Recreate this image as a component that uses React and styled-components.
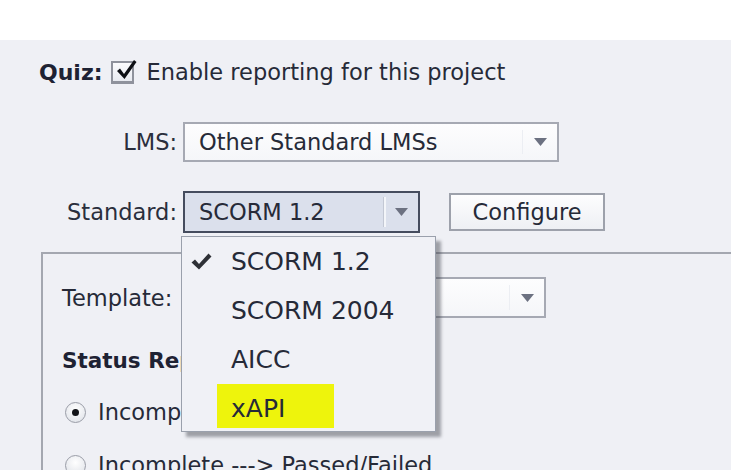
import React from "react";
import styled, { createGlobalStyle } from "styled-components";

const Global = createGlobalStyle`
  html, body { margin: 0; padding: 0; overflow: hidden; background: #ffffff; }
  body { font-family: "DejaVu Sans", "Liberation Sans", sans-serif; color: #262a38; }
  * { box-sizing: border-box; }
`;

const Page = styled.div`
  width: 731px;
  height: 470px;
  overflow: hidden;
  display: flex;
  flex-direction: column;
`;

const TopBar = styled.div`
  height: 40px;
  flex: none;
  background: #ffffff;
`;

const Panel = styled.div`
  flex: 1;
  background: #eff0f5;
  padding: 12px 0 0 39px;
  display: flex;
  flex-direction: column;
  font-size: 22.5px;
`;

const QuizRow = styled.div`
  height: 40px;
  display: flex;
  align-items: center;
`;

const QuizLabel = styled.span`
  font-weight: bold;
  font-size: 22px;
  color: #1e2233;
  margin-right: 8px;
`;

const CheckBox = styled.span`
  position: relative;
  width: 23px;
  height: 23px;
  border: 2px solid #8f929c;
  border-bottom-width: 3px;
  background: linear-gradient(#fbfbfd, #e8eaf0);
  margin-right: 13px;
  flex: none;
  svg { position: absolute; left: 1px; top: -5px; }
`;

const FormGrid = styled.div`
  display: grid;
  grid-template-columns: 138px auto;
  column-gap: 6px;
  align-items: center;
  margin-top: ${(p) => p.$top}px;
`;

const Label = styled.span`
  text-align: right;
  white-space: nowrap;
  color: #2a2e3c;
`;

const Select = styled.div`
  position: relative;
  width: ${(p) => p.$w}px;
  height: ${(p) => p.$h}px;
  border: 2px solid ${(p) => (p.$active ? "#454c5e" : "#a6a9b3")};
  background: ${(p) => (p.$active ? "#dbe0ec" : "linear-gradient(#fdfdfe, #f5f6f9)")};
  display: flex;
  align-items: center;
  padding-left: 14px;
  white-space: nowrap;
  color: #262a38;
`;

const SelectText = styled.span`
  flex: 1;
`;

const ArrowZone = styled.span`
  width: 35px;
  align-self: stretch;
  display: flex;
  align-items: center;
  justify-content: center;
  border-left: 1px solid ${(p) => (p.$active ? "#c3c8d4" : "#eceef3")};
  box-shadow: ${(p) => (p.$active ? "inset 2px 0 0 #f3f5f9" : "none")};
  margin: ${(p) => (p.$active ? "4px 0" : "6px 0")};
`;

const Arrow = () => (
  <svg width="13" height="8" viewBox="0 0 13 8">
    <path d="M0 0 H13 L6.5 8 Z" fill="#6c7181" />
  </svg>
);

const StandardCell = styled.div`
  display: flex;
  align-items: center;
  gap: 29px;
`;

const Button = styled.div`
  width: 156px;
  height: 38px;
  border: 2px solid #9da1ab;
  background: linear-gradient(#fdfdfe, #eef0f4);
  display: flex;
  align-items: center;
  justify-content: center;
  color: #262a38;
`;

const Menu = styled.div`
  position: absolute;
  left: -4px;
  top: 43px;
  width: 255px;
  height: 196px;
  background: #f0f1f6;
  border: 1.5px solid #9aa0ac;
  box-shadow: 5px 5px 3px rgba(60, 62, 70, 0.45);
  z-index: 10;
  display: flex;
  flex-direction: column;
  font-size: 25px;
`;

const MenuItem = styled.div`
  height: 49px;
  flex: none;
  display: flex;
  align-items: ${(p) => (p.$hl ? "flex-start" : "center")};
`;

const CheckCol = styled.span`
  width: 49px;
  flex: none;
  display: flex;
  align-items: center;
  padding-left: 9px;
`;

const Highlight = styled.span`
  display: inline-flex;
  align-items: center;
  height: 44px;
  margin-left: -14px;
  padding: 4px 49px 0 14px;
  background: #eef40c;
`;

const GroupBox = styled.div`
  margin-top: 19px;
  margin-left: 2px;
  margin-right: -20px;
  flex: 1;
  border: 2px solid #a4a7b0;
  border-right: none;
  border-bottom: none;
  padding: 23px 0 0 19px;
  display: flex;
  flex-direction: column;
`;

const TemplateGrid = styled.div`
  display: grid;
  grid-template-columns: 114px auto;
  column-gap: 6px;
  align-items: center;
`;

const TemplateLabel = styled.span`
  white-space: nowrap;
`;

const SectionTitle = styled.div`
  height: 30px;
  margin-top: 27px;
  display: flex;
  align-items: center;
  font-weight: bold;
  font-size: 21.5px;
  color: #1e2233;
`;

const RadioRow = styled.div`
  height: 30px;
  margin-top: ${(p) => p.$top}px;
  display: flex;
  align-items: center;
  gap: 12px;
  white-space: nowrap;
  padding-left: 3px;
`;

const Radio = styled.span`
  width: 21px;
  height: 21px;
  border-radius: 50%;
  border: 1.5px solid #9a9da7;
  background: radial-gradient(circle at 50% 35%, #ffffff, #dcdfe6);
  display: flex;
  align-items: center;
  justify-content: center;
  flex: none;
  &::after {
    content: "";
    width: 7px;
    height: 7px;
    border-radius: 50%;
    background: ${(p) => (p.$on ? "#111318" : "transparent")};
  }
`;

const BigCheck = () => (
  <svg width="24" height="24" viewBox="0 0 24 24">
    <path d="M3 13 L6 10.5 L10 16 L20 2 L22.5 4 L10.5 21 Z" fill="#0d0f14" />
  </svg>
);

const SmallCheck = () => (
  <svg width="21" height="17" viewBox="0 0 21 17">
    <path d="M0.5 9.5 L4 6.5 L8 11 L17.5 0.5 L20.5 3.5 L8 16.5 Z" fill="#2e3036" />
  </svg>
);

const options = ["SCORM 1.2", "SCORM 2004", "AICC", "xAPI"];

export default function App() {
  return (
    <Page>
      <Global />
      <TopBar />
      <Panel>
        <QuizRow>
          <QuizLabel>Quiz:</QuizLabel>
          <CheckBox>
            <BigCheck />
          </CheckBox>
          <span>Enable reporting for this project</span>
        </QuizRow>

        <FormGrid $top={30}>
          <Label>LMS:</Label>
          <Select $w={376} $h={40}>
            <SelectText>Other Standard LMSs</SelectText>
            <ArrowZone>
              <Arrow />
            </ArrowZone>
          </Select>
        </FormGrid>

        <FormGrid $top={29}>
          <Label>Standard:</Label>
          <StandardCell>
            <Select $w={237} $h={42} $active>
              <SelectText>SCORM 1.2</SelectText>
              <ArrowZone $active>
                <Arrow />
              </ArrowZone>
              <Menu>
                {options.map((o, i) => (
                  <MenuItem key={o} $hl={o === "xAPI"}>
                    <CheckCol>{i === 0 ? <SmallCheck /> : null}</CheckCol>
                    {o === "xAPI" ? <Highlight>{o}</Highlight> : <span>{o}</span>}
                  </MenuItem>
                ))}
              </Menu>
            </Select>
            <Button>Configure</Button>
          </StandardCell>
        </FormGrid>

        <GroupBox>
          <TemplateGrid>
            <TemplateLabel>Template:</TemplateLabel>
            <Select $w={364} $h={41}>
              <SelectText />
              <ArrowZone>
                <Arrow />
              </ArrowZone>
            </Select>
          </TemplateGrid>
          <SectionTitle>Status Representation</SectionTitle>
          <RadioRow $top={22}>
            <Radio $on />
            <span>Incomplete ---&gt; Complete</span>
          </RadioRow>
          <RadioRow $top={23}>
            <Radio />
            <span>Incomplete ---&gt; Passed/Failed</span>
          </RadioRow>
        </GroupBox>
      </Panel>
    </Page>
  );
}
